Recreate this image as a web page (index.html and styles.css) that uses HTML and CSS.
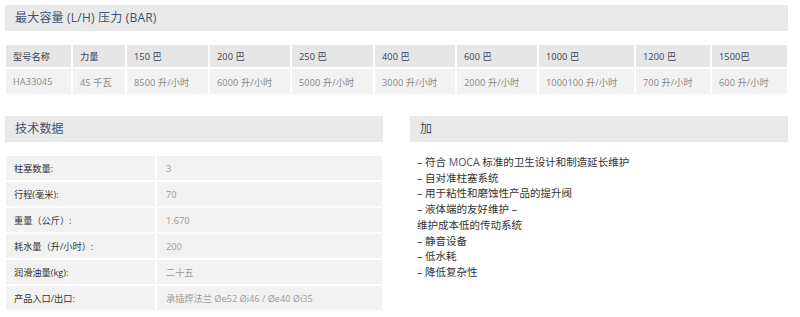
FILE: index.html
```html
<!DOCTYPE html>
<html lang="zh">
<head>
<meta charset="utf-8">
<title>HA33045</title>
<link rel="stylesheet" href="styles.css">
</head>
<body>
<div class="page">
  <h2 class="bar">最大容量 (L/H) 压力 (BAR)</h2>
  <table class="cap">
    <colgroup>
      <col class="c1"><col class="c2"><col class="c3"><col class="c4"><col class="c5">
      <col class="c6"><col class="c7"><col class="c8"><col class="c9"><col class="c10">
    </colgroup>
    <thead>
      <tr>
        <th>型号名称</th><th>力量</th><th>150 巴</th><th>200 巴</th><th>250 巴</th>
        <th>400 巴</th><th>600 巴</th><th>1000 巴</th><th>1200 巴</th><th>1500巴</th>
      </tr>
    </thead>
    <tbody>
      <tr>
        <td>HA33045</td><td>45 千瓦</td><td>8500 升/小时</td><td>6000 升/小时</td><td>5000 升/小时</td>
        <td>3000 升/小时</td><td>2000 升/小时</td><td>1000100 升/小时</td><td>700 升/小时</td><td>600 升/小时</td>
      </tr>
    </tbody>
  </table>

  <div class="lower">
    <section class="col">
      <h2 class="bar">技术数据</h2>
      <table class="spec">
        <colgroup><col class="s1"><col class="s2"></colgroup>
        <tbody>
          <tr><th>柱塞数量:</th><td>3</td></tr>
          <tr><th>行程(毫米):</th><td>70</td></tr>
          <tr><th>重量（公斤）:</th><td>1.670</td></tr>
          <tr><th>耗水量（升/小时）:</th><td>200</td></tr>
          <tr><th>润滑油量(kg):</th><td>二十五</td></tr>
          <tr><th>产品入口/出口:</th><td>承插焊法兰 Øe52 Øi46 / Øe40 Øi35</td></tr>
        </tbody>
      </table>
    </section>
    <section class="col">
      <h2 class="bar">加</h2>
      <div class="notes">
        <p>– 符合 <span class="brand">MOCA</span> 标准的卫生设计和制造延长维护</p>
        <p>– 自对准柱塞系统</p>
        <p>– 用于粘性和磨蚀性产品的提升阀</p>
        <p>– 液体端的友好维护 –</p>
        <p>维护成本低的传动系统</p>
        <p>– 静音设备</p>
        <p>– 低水耗</p>
        <p>– 降低复杂性</p>
      </div>
    </section>
  </div>
</div>
</body>
</html>
```

FILE: styles.css
```css
* { box-sizing: border-box; }
html, body { margin: 0; padding: 0; background: #fff; }
body {
  font-family: "Open Sans", "Noto Sans CJK SC", sans-serif;
  color: #333;
}
.page {
  width: 800px;
  padding: 5px 12px 0 5px;
}
.bar {
  margin: 0;
  height: 26px;
  line-height: 26px;
  padding-left: 10px;
  background: #e9e9e9;
  color: #3f5170;
  font-size: 12px;
  font-weight: 400;
  letter-spacing: 0.2px;
}
.cap {
  table-layout: fixed;
  border-collapse: separate;
  border-spacing: 2px;
  width: 785px;
  margin: 12px 0 0 -1px;
  font-size: 9.2px;
  letter-spacing: 0.1px;
}
.cap col.c1 { width: 65px; }
.cap col.c2 { width: 52px; }
.cap col.c3 { width: 81px; }
.cap col.c4 { width: 80px; }
.cap col.c5 { width: 81px; }
.cap col.c6 { width: 80px; }
.cap col.c7 { width: 80px; }
.cap col.c8 { width: 95px; }
.cap col.c9 { width: 74px; }
.cap col.c10 { width: 75px; }
.cap th, .cap td {
  padding: 0 0 0 7px;
  text-align: left;
  white-space: nowrap;
  overflow: hidden;
}
.cap th {
  height: 22px;
  background: #e6e6e6;
  color: #3a4258;
  font-weight: 400;
}
.cap td {
  height: 25px;
  background: #f2f2f2;
  color: #888;
}
.lower {
  display: flex;
  gap: 27px;
  margin-top: 20px;
}
.col { width: 378px; }
.spec {
  table-layout: fixed;
  border-collapse: separate;
  border-spacing: 2px;
  width: 380px;
  margin: 12px 0 0 -1px;
  font-size: 9.2px;
}
.spec col.s1 { width: 149px; }
.spec col.s2 { width: 225px; }
.spec th, .spec td {
  height: 24px;
  background: #f2f2f2;
  text-align: left;
  font-weight: 400;
  white-space: nowrap;
}
.spec th { padding-left: 8px; color: #333; }
.spec td { padding-left: 9px; color: #9a9a9a; }
.notes {
  margin-top: 13px;
  padding-left: 7px;
  font-size: 10.5px;
  line-height: 15.7px;
  color: #333;
}
.notes p { margin: 0; }
.brand { color: #4d4a86; }
```
